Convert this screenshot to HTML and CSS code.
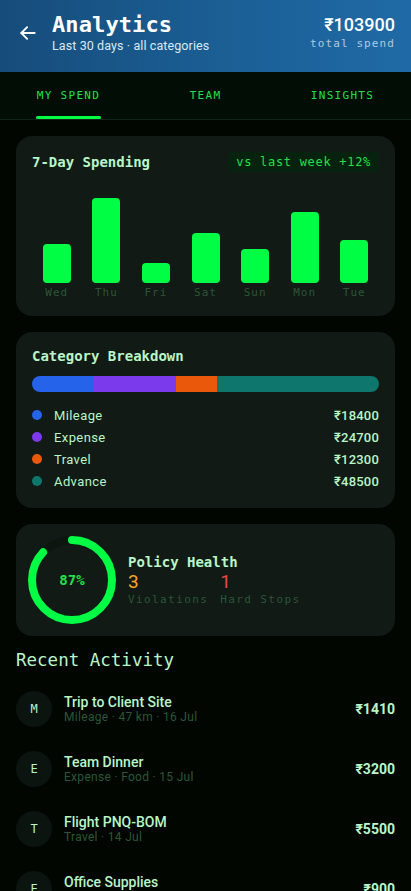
FILE: index.html
```html
<!DOCTYPE html>
<html lang="en">
<head>
    <meta charset="UTF-8">
    <title>Analytics</title>
    <meta name="viewport" content="width=device-width, initial-scale=1">
    <link rel="stylesheet" href="styles.css">
</head>
<body>
    <header class="topbar">
        <button class="back" aria-label="Back">
            <svg width="20" height="20" viewBox="0 0 24 24" fill="none" stroke="#ffffff" stroke-width="2.2" stroke-linecap="round" stroke-linejoin="round">
                <path d="M20 12H4"/>
                <path d="M11 5l-7 7 7 7"/>
            </svg>
        </button>
        <div class="title-block">
            <h1>Analytics</h1>
            <p class="subtitle">Last 30 days · all categories</p>
        </div>
        <div class="total">
            <div class="total-amount">₹103900</div>
            <div class="total-label">total spend</div>
        </div>
    </header>

    <nav class="tabs">
        <a class="tab active">MY SPEND</a>
        <a class="tab">TEAM</a>
        <a class="tab">INSIGHTS</a>
    </nav>

    <main class="content">
        <section class="card">
            <div class="card-head">
                <h2>7-Day Spending</h2>
                <span class="badge">vs last week +12%</span>
            </div>
            <div class="chart">
                <div class="day"><div class="bar-wrap"><div class="bar" style="height: 39px"></div></div><span>Wed</span></div>
                <div class="day"><div class="bar-wrap"><div class="bar" style="height: 85px"></div></div><span>Thu</span></div>
                <div class="day"><div class="bar-wrap"><div class="bar" style="height: 20px"></div></div><span>Fri</span></div>
                <div class="day"><div class="bar-wrap"><div class="bar" style="height: 50px"></div></div><span>Sat</span></div>
                <div class="day"><div class="bar-wrap"><div class="bar" style="height: 34px"></div></div><span>Sun</span></div>
                <div class="day"><div class="bar-wrap"><div class="bar" style="height: 71px"></div></div><span>Mon</span></div>
                <div class="day"><div class="bar-wrap"><div class="bar" style="height: 43px"></div></div><span>Tue</span></div>
            </div>
        </section>

        <section class="card">
            <h2>Category Breakdown</h2>
            <div class="stack">
                <div class="seg mileage" style="width: 17.71%"></div>
                <div class="seg expense" style="width: 23.77%"></div>
                <div class="seg travel" style="width: 11.84%"></div>
                <div class="seg advance" style="width: 46.68%"></div>
            </div>
            <ul class="legend">
                <li><i class="dot mileage"></i><span class="name">Mileage</span><span class="amt">₹18400</span></li>
                <li><i class="dot expense"></i><span class="name">Expense</span><span class="amt">₹24700</span></li>
                <li><i class="dot travel"></i><span class="name">Travel</span><span class="amt">₹12300</span></li>
                <li><i class="dot advance"></i><span class="name">Advance</span><span class="amt">₹48500</span></li>
            </ul>
        </section>

        <section class="card health">
            <div class="ring">
                <svg width="88" height="88" viewBox="0 0 88 88">
                    <circle cx="44" cy="44" r="40" fill="none" stroke="#0b160e" stroke-width="8"/>
                    <circle cx="44" cy="44" r="40" fill="none" stroke="#00ff44" stroke-width="8"
                            stroke-linecap="round" stroke-dasharray="218.7 251.3"
                            transform="rotate(-90 44 44)"/>
                </svg>
                <span class="ring-label">87%</span>
            </div>
            <div class="health-info">
                <h2>Policy Health</h2>
                <div class="stats">
                    <div class="stat"><span class="num warn">3</span><span class="cap">Violations</span></div>
                    <div class="stat"><span class="num danger">1</span><span class="cap">Hard Stops</span></div>
                </div>
            </div>
        </section>

        <h3 class="section-title">Recent Activity</h3>
        <ul class="activity">
            <li>
                <span class="avatar">M</span>
                <div class="info"><div class="what">Trip to Client Site</div><div class="meta">Mileage · 47 km · 16 Jul</div></div>
                <span class="price">₹1410</span>
            </li>
            <li>
                <span class="avatar">E</span>
                <div class="info"><div class="what">Team Dinner</div><div class="meta">Expense · Food · 15 Jul</div></div>
                <span class="price">₹3200</span>
            </li>
            <li>
                <span class="avatar">T</span>
                <div class="info"><div class="what">Flight PNQ-BOM</div><div class="meta">Travel · 14 Jul</div></div>
                <span class="price">₹5500</span>
            </li>
            <li>
                <span class="avatar">E</span>
                <div class="info"><div class="what">Office Supplies</div><div class="meta">Expense · Office · 12 Jul</div></div>
                <span class="price">₹900</span>
            </li>
        </ul>
    </main>
</body>
</html>
```

FILE: styles.css
```css
* {
    box-sizing: border-box;
}

html, body {
    height: 100%;
}

body {
    margin: 0;
    padding: 0;
    background: #010601;
    font-family: Roboto, "Liberation Sans", sans-serif;
    color: #b8f5c8;
    display: flex;
    flex-direction: column;
    overflow: hidden;
}

h1, h2, h3, p, ul {
    margin: 0;
    padding: 0;
}

ul {
    list-style: none;
}

/* header */
.topbar {
    flex: none;
    height: 72px;
    display: flex;
    align-items: center;
    padding: 0 16px 6px 16px;
    background: linear-gradient(90deg, #164c7b 0%, #1b5f95 55%, #1f6aa6 100%);
    color: #fff;
}

.back {
    background: none;
    border: none;
    padding: 0;
    margin: 0 14px 0 2px;
    width: 20px;
    height: 20px;
    display: flex;
}

.title-block {
    flex: 1;
}

.topbar h1 {
    font-family: "DejaVu Sans Mono", monospace;
    font-size: 22px;
    font-weight: bold;
    line-height: 26px;
    letter-spacing: 0.1px;
}

.subtitle {
    font-size: 12.5px;
    letter-spacing: 0.1px;
    color: #dce8f2;
    line-height: 16px;
}

.total {
    text-align: right;
}

.total-amount {
    font-size: 18px;
    font-weight: 500;
    line-height: 22px;
}

.total-label {
    font-family: "DejaVu Sans Mono", monospace;
    font-size: 11px;
    letter-spacing: 1.1px;
    color: #b4c9dc;
    line-height: 16px;
}

/* tabs */
.tabs {
    flex: none;
    display: flex;
    height: 48px;
    background: #020d05;
    border-bottom: 1px solid #0f2517;
}

.tab {
    flex: 1;
    display: flex;
    align-items: center;
    justify-content: center;
    font-family: "DejaVu Sans Mono", monospace;
    font-size: 11px;
    letter-spacing: 1.3px;
    color: #1fe048;
    position: relative;
}

.tab.active::after {
    content: "";
    position: absolute;
    left: 36px;
    right: 36px;
    bottom: 0;
    height: 3px;
    border-radius: 2px;
    background: #00ff44;
}

/* cards */
.content {
    flex: 1;
    padding: 16px;
}

.card {
    background: #111a14;
    border-radius: 16px;
    padding: 16px;
    margin-bottom: 16px;
}

.card h2 {
    font-family: "DejaVu Sans Mono", monospace;
    font-size: 14px;
    font-weight: bold;
    color: #b8f5c8;
    line-height: 16px;
}

.card-head {
    display: flex;
    justify-content: space-between;
    align-items: center;
}

.badge {
    background: #07230f;
    color: #22e04a;
    font-family: "DejaVu Sans Mono", monospace;
    font-size: 12px;
    letter-spacing: 0.7px;
    padding: 2px 8px;
    border-radius: 4px;
    line-height: 16px;
}

.chart {
    display: flex;
    margin-top: 10px;
}

.day {
    flex: 1;
    display: flex;
    flex-direction: column;
    align-items: center;
}

.bar-wrap {
    height: 101px;
    display: flex;
    align-items: flex-end;
}

.bar {
    width: 28px;
    background: #00ff44;
    border-radius: 4px;
}

.day span {
    margin-top: 3px;
    font-family: "DejaVu Sans Mono", monospace;
    font-size: 11px;
    letter-spacing: 1px;
    color: #2b5638;
    line-height: 14px;
}

/* category breakdown */
.stack {
    display: flex;
    height: 16px;
    border-radius: 8px;
    overflow: hidden;
    margin-top: 12px;
}

.mileage { background: #2563eb; }
.expense { background: #7c3aed; }
.travel  { background: #ea580c; }
.advance { background: #0f766e; }

.legend {
    margin-top: 12px;
}

.legend li {
    display: flex;
    align-items: center;
    height: 22px;
}

.dot {
    width: 10px;
    height: 10px;
    border-radius: 50%;
    margin-right: 12px;
}

.legend .name {
    flex: 1;
    font-size: 13px;
    letter-spacing: 0.4px;
}

.legend .amt {
    font-size: 13px;
    font-weight: 500;
    letter-spacing: 0.2px;
}

/* policy health */
.health {
    display: flex;
    align-items: center;
    padding: 12px;
}

.ring {
    position: relative;
    width: 88px;
    height: 88px;
    margin-right: 12px;
}

.ring svg {
    display: block;
}

.ring-label {
    position: absolute;
    inset: 0;
    display: flex;
    align-items: center;
    justify-content: center;
    font-family: "DejaVu Sans Mono", monospace;
    font-weight: bold;
    font-size: 14px;
    color: #22e04a;
}

.health-info h2 {
    line-height: 18px;
}

.stats {
    display: flex;
    gap: 12px;
    margin-top: 1px;
}

.stat {
    display: flex;
    flex-direction: column;
}

.num {
    font-size: 19px;
    line-height: 20px;
}

.warn { color: #f5a524; }
.danger { color: #ef4444; }

.cap {
    font-family: "DejaVu Sans Mono", monospace;
    font-size: 11px;
    letter-spacing: 1.4px;
    color: #2b5638;
    line-height: 16px;
}

/* recent activity */
.section-title {
    font-family: "DejaVu Sans Mono", monospace;
    font-size: 17.5px;
    font-weight: normal;
    color: #b8f5c8;
    margin: 0 0 23px 0;
    line-height: 16px;
}

.activity li {
    display: flex;
    align-items: center;
    height: 36px;
    margin-bottom: 24px;
}

.avatar {
    width: 36px;
    height: 36px;
    border-radius: 50%;
    background: #0c140f;
    display: flex;
    align-items: center;
    justify-content: center;
    font-family: "DejaVu Sans Mono", monospace;
    font-size: 12px;
    color: #b8f5c8;
    margin-right: 12px;
}

.info {
    flex: 1;
}

.what {
    font-size: 14px;
    font-weight: 500;
    line-height: 16px;
}

.meta {
    font-size: 12px;
    letter-spacing: 0.3px;
    color: #2b5638;
    line-height: 14px;
}

.price {
    font-size: 14px;
    font-weight: bold;
}
```
